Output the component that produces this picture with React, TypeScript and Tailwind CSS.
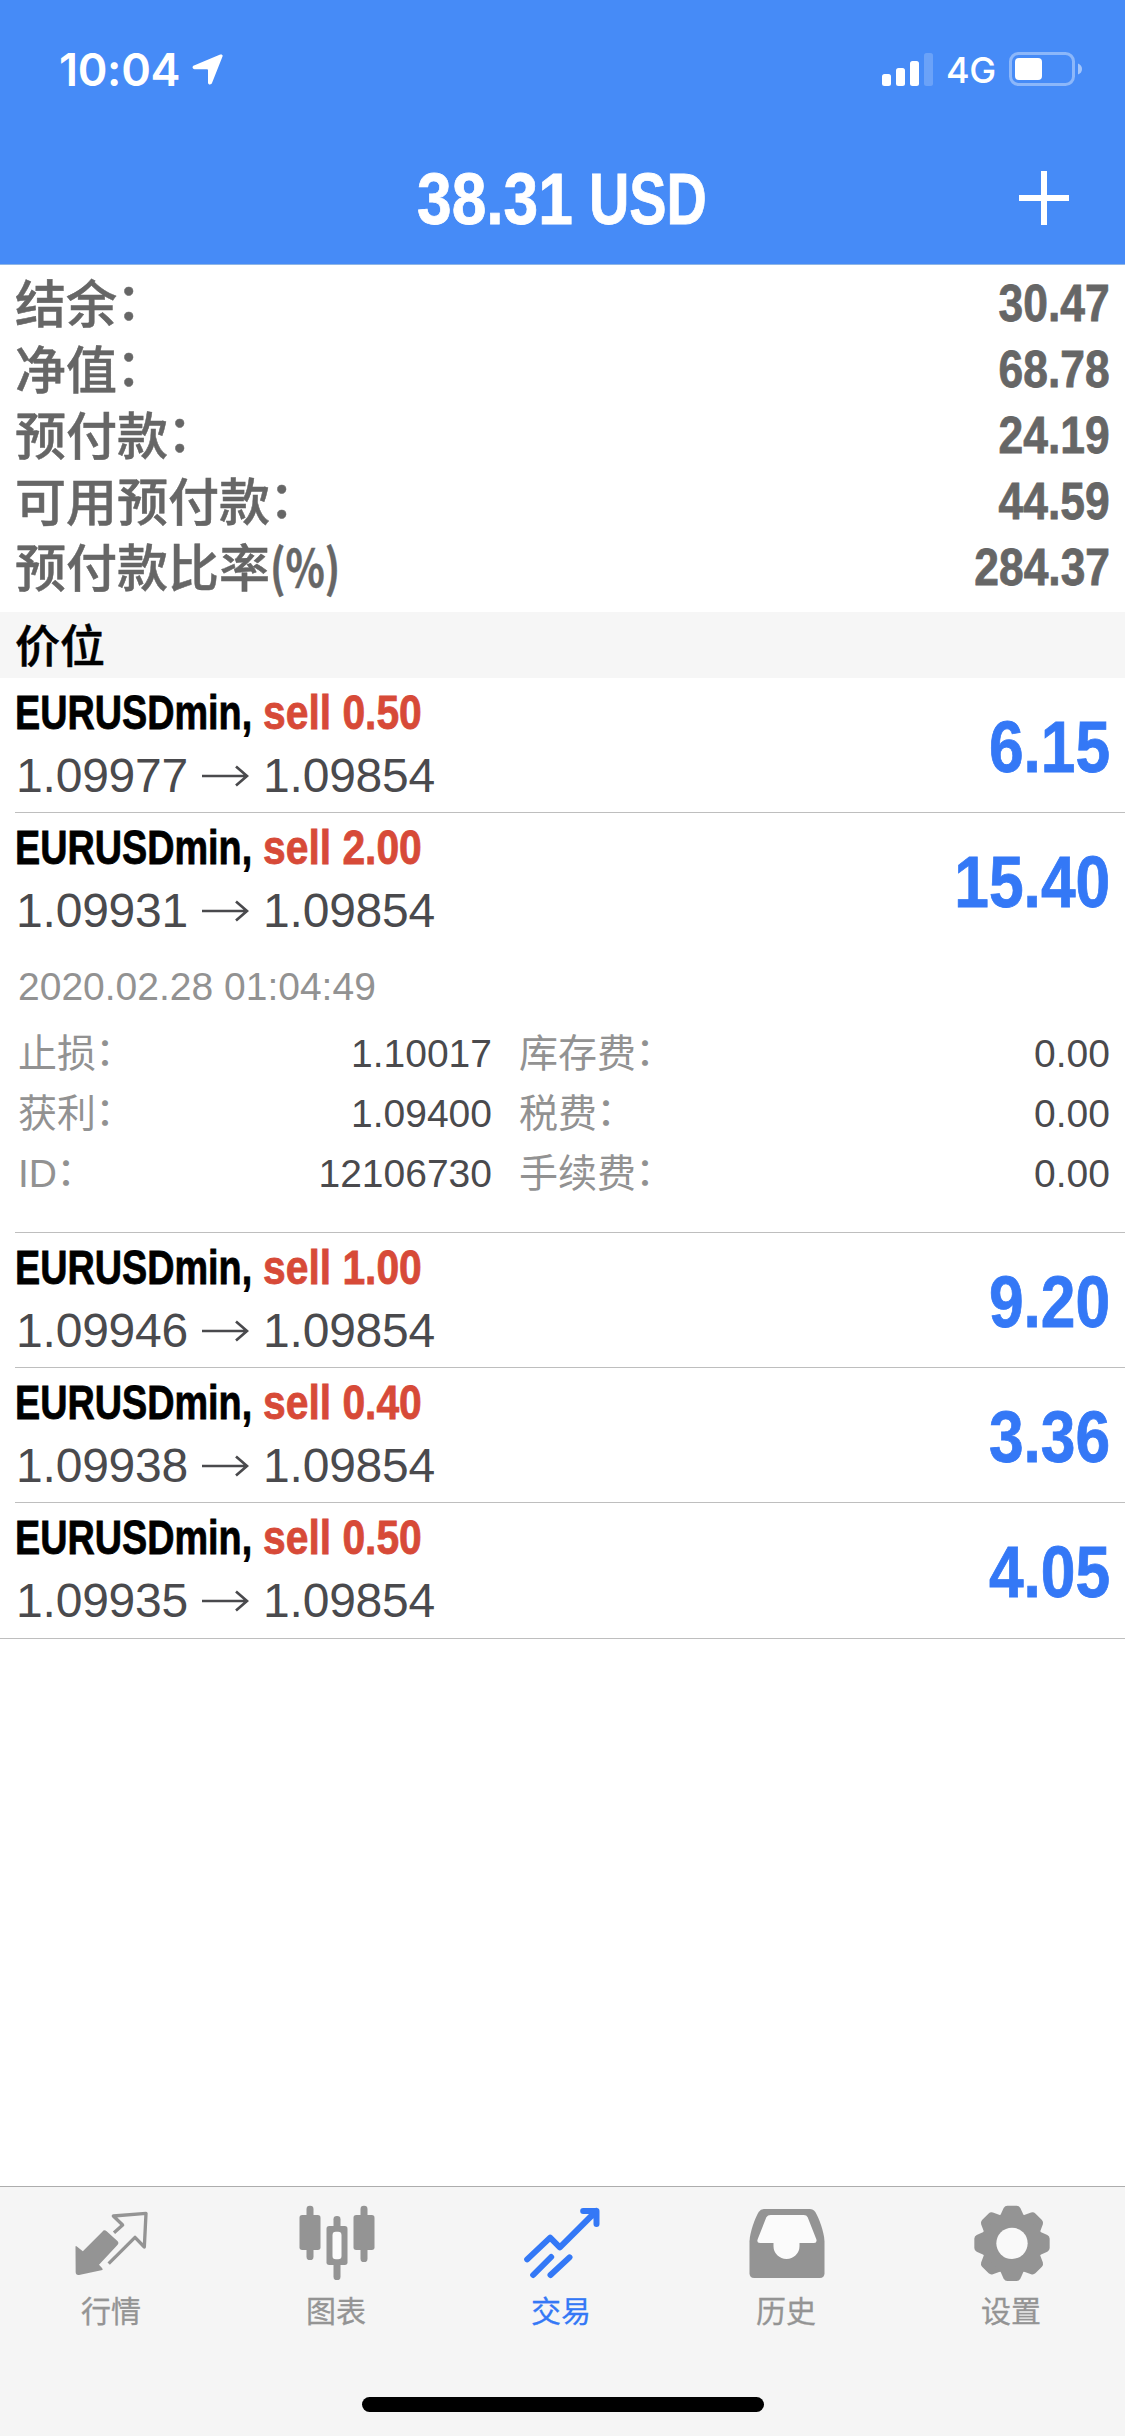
import type { ReactNode } from 'react';

const COND = "font-['Liberation_Sans',sans-serif] font-bold [-webkit-text-stroke:0.8px_currentColor]";
const HELV = "font-['Liberation_Sans','Noto_Sans_CJK_SC',sans-serif]";
const CJK = "font-['Noto_Sans_CJK_SC',sans-serif]";

interface Position {
  id: number;
  lots: string;
  open: string;
  profit: string;
  expanded?: boolean;
}

const SUMMARY = [
  ['结余：', '30.47'],
  ['净值：', '68.78'],
  ['预付款：', '24.19'],
  ['可用预付款：', '44.59'],
  ['预付款比率(%)', '284.37'],
];

const POSITIONS: Position[] = [
  { id: 1, lots: '0.50', open: '1.09977', profit: '6.15' },
  { id: 2, lots: '2.00', open: '1.09931', profit: '15.40', expanded: true },
  { id: 3, lots: '1.00', open: '1.09946', profit: '9.20' },
  { id: 4, lots: '0.40', open: '1.09938', profit: '3.36' },
  { id: 5, lots: '0.50', open: '1.09935', profit: '4.05' },
];

const DETAILS = [
  ['止损：', '1.10017', '库存费：', '0.00'],
  ['获利：', '1.09400', '税费：', '0.00'],
  ['ID：', '12106730', '手续费：', '0.00'],
];

// raises the full-width colon and squeezes the trailing "(%)"
function Label({ text }: { text: string }) {
  const m = text.match(/^(.*?)(：|\(%\))$/);
  if (!m) return <span>{text}</span>;
  return (
    <span className="whitespace-nowrap">
      {m[1]}
      {m[2] === '：' ? (
        <span className="inline-block -translate-x-[0.02em] -translate-y-[0.05em]">：</span>
      ) : (
        <span className="inline-block origin-left scale-x-[0.8] font-bold">(%)</span>
      )}
    </span>
  );
}

function StatusBar() {
  return (
    <div className="flex h-[132px] items-start justify-between pt-[42px] pr-[42px] pl-[59px] text-white">
      <div className="flex h-[54px] items-center">
        <span className="w-[133px] font-['Inter',sans-serif] text-[45px] leading-none font-semibold tracking-[-0.3px]">10:04</span>
        <svg className="h-[31px] w-[31px]" viewBox="0 0 31 31" fill="currentColor">
          <path d="M28.2 .6c1.6-.7 2.9.4 2.3 2L20 29c-.9 2.2-4 1.800-4-.6V16.400c0-.8-.4-1.200-1.200-1.200H2.600c-2.400 0-2.800-2.900-.6-3.800z" />
        </svg>
      </div>
      <div className="flex h-[54px] items-center">
        <svg className="h-[33px] w-[52px]" viewBox="0 0 52 33" fill="currentColor">
          <rect x="0" y="21" width="9" height="12" rx="2.500" />
          <rect x="14" y="15" width="9" height="18" rx="2.500" />
          <rect x="28" y="8" width="9" height="25" rx="2.500" />
          <rect x="42" y="0" width="9" height="33" rx="2.500" opacity=".2" />
        </svg>
        <span className="ml-[12px] w-[63px] pt-[2px] font-['Inter',sans-serif] text-[36px] leading-none font-medium tracking-[-0.5px]">4G</span>
        <svg className="h-[34px] w-[74px]" viewBox="0 0 74 34" fill="none">
          <rect x="1.500" y="1.500" width="63" height="31" rx="8" stroke="#fff" strokeOpacity=".38" strokeWidth="3" />
          <rect x="6" y="6" width="27" height="22" rx="4" fill="#fff" />
          <path d="M69 11.500q4 1.500 4 5.500t-4 5.500z" fill="#fff" fillOpacity=".5" />
        </svg>
      </div>
    </div>
  );
}

function Header() {
  return (
    <header className="h-[265px] border-b border-[#8fb6e6] bg-[#468bf7]">
      <StatusBar />
      <div className="grid h-[132px] grid-cols-[1fr_auto_1fr] items-center px-[54px] text-white">
        <span />
        <h1 className={`${COND} flex pt-px text-[72px] leading-none`}>
          <span className="w-[172px]">
            <span className="inline-block origin-left scale-x-[0.865]">38.31</span>
          </span>
          <span className="w-[120px]">
            <span className="inline-block origin-left scale-x-[0.775]">USD</span>
          </span>
        </h1>
        <svg className="h-[54px] w-[54px] justify-self-end" viewBox="0 0 54 54" stroke="currentColor" strokeWidth="6">
          <path d="M27 0v54M2 27h50" />
        </svg>
      </div>
    </header>
  );
}

function Summary() {
  return (
    <dl className="pt-[6px] pr-[15px] pb-[11px] pl-[15px] text-[51px] text-[#666]">
      {SUMMARY.map(([label, value]) => (
        <div key={label} className="flex h-[66px] items-center justify-between">
          <dt className={`${CJK} pb-[6px] leading-[60px] font-medium [-webkit-text-stroke:0.5px_currentColor]`}>
            <Label text={label} />
          </dt>
          <dd className={`${COND} origin-right scale-x-[0.87] leading-[66px]`}>{value}</dd>
        </div>
      ))}
    </dl>
  );
}

function PositionRow({ p, last }: { p: Position; last: boolean }) {
  return (
    <li className={last ? 'border-b border-[#bebebe]' : ''}>
      <div className={last ? 'h-[135px] pr-[15px] pl-[15px]' : 'ml-[15px] border-b border-[#bebebe] pr-[15px]'}>
        <div className="flex h-[134px] items-center justify-between">
          <div className="pb-[2px]">
            <p className={`${COND} flex h-[63px] text-[48px] leading-[63px] text-black`}>
              <span className="w-[248px]">
                <span className="inline-block origin-left scale-x-[0.787]">EURUSDmin,</span>
              </span>
              <span className="origin-left scale-x-[0.85] text-[#d74a38]">sell {p.lots}</span>
            </p>
            <p className={`${HELV} flex h-[63px] items-center pl-px text-[48px] leading-[63px] tracking-[-0.2px] text-[#4a4a4d]`}>
              <span className="w-[186px]">{p.open}</span>
              <svg className="h-[22px] w-[47px]" viewBox="0 0 47 22" fill="none" stroke="currentColor" strokeWidth="2.700">
                <path d="M0 11h45M34 1.500l11 9.500-11 9.500" />
              </svg>
              <span className="ml-[14px]">1.09854</span>
            </p>
          </div>
          <span className={`${COND} origin-right scale-x-[0.865] pt-[4px] text-[72px] leading-none text-[#3478f6]`}>{p.profit}</span>
        </div>

        {p.expanded && (
          <div className={`${HELV} h-[285px] pt-[10px] pl-[3px] text-[39px] text-[#929292]`}>
            <p className="h-[60px] leading-[60px]">2020.02.28 01:04:49</p>
            <div className="mt-[7px]">
              {DETAILS.map(([l1, v1, l2, v2]) => (
                <div key={l1} className="flex h-[60px] items-center leading-[60px]">
                  <span className="flex w-[474px] justify-between">
                    <Label text={l1} />
                    <span className="text-[#4a4a4d]">{v1}</span>
                  </span>
                  <span className="ml-[27px] flex flex-1 justify-between">
                    <Label text={l2} />
                    <span className="text-[#4a4a4d]">{v2}</span>
                  </span>
                </div>
              ))}
            </div>
          </div>
        )}
      </div>
    </li>
  );
}

function Icon({ children }: { children: ReactNode }) {
  return (
    <svg className="h-[80px] w-[80px]" viewBox="0 0 240 240" fill="currentColor">
      {children}
    </svg>
  );
}

const TOOTH = 'M-35 -84L-25 -106Q-21 -113 -14 -113H14Q21 -113 25 -106L35 -84Z';

const TABS = [
  {
    label: '行情',
    icon: (
      <Icon>
        <path d="M7.500 132q0-5 4-1.500L29.500 145 88 86q6-8 13-1l33 30q5 5 0 10L78 185l9 10q5 6-2 7L18 216q-10 1-10-9z" />
        <path d="M123 89l26-23-28-27 98-8-5 101-28-29-79 79" fill="none" stroke="currentColor" strokeWidth="10" strokeLinejoin="round" />
      </Icon>
    ),
  },
  {
    label: '图表',
    icon: (
      <Icon>
        <rect x="25.500" y="8" width="21" height="163" rx="10" />
        <rect x="4.500" y="36" width="63" height="105" rx="8" />
        <rect x="106.500" y="39" width="21" height="192" rx="10" />
        <rect x="85.500" y="69" width="63" height="117" rx="8" />
        <rect x="103.500" y="86" width="27" height="83" rx="10" fill="#fbfbfb" />
        <rect x="187.500" y="8" width="21" height="169" rx="10" />
        <rect x="166.500" y="36" width="63" height="105" rx="8" />
      </Icon>
    ),
  },
  {
    label: '交易',
    active: true,
    icon: (
      <Icon>
        <path
          d="M12.500 169l69-65 29 29L220 24M180.500 24h40v39M30.500 216l54-54M82.500 216l57-53"
          fill="none" stroke="currentColor" strokeWidth="18" strokeLinecap="round" strokeLinejoin="round"
        />
      </Icon>
    ),
  },
  {
    label: '历史',
    icon: (
      <Icon>
        <path d="M4.500 115C6 84 22 44 32 27q6-9 17-9h136q11 0 17 9c10 17 26 57 27.500 88v96q0 14-14 14h-197q-14 0-14-14z" />
        <path d="M68 36h99q9 0 12 7l26 66q3 11-7 11h-43.500v10a39 38 0 0 1-78 0v-10H36q-11 0-7-11l26-66q4-7 13-7z" fill="#fbfbfb" />
      </Icon>
    ),
  },
  {
    label: '设置',
    icon: (
      <Icon>
        <g transform="translate(117 121)">
          <circle r="92" />
          {[0, 45, 90, 135, 180, 225, 270, 315].map((a) => (
            <path key={a} d={TOOTH} transform={`rotate(${a})`} />
          ))}
          <circle r="47" fill="#f9f9f9" />
        </g>
      </Icon>
    ),
  },
];

function TabBar() {
  return (
    <nav className="flex h-[250px] flex-col items-center justify-between border-t border-[#adadad] bg-[#f5f5f5] pb-6">
      <div className="grid w-full grid-cols-5 pt-4">
        {TABS.map((t) => (
          <div key={t.label} className={`flex flex-col items-center ${t.active ? 'text-[#3478f6]' : 'text-[#949494]'}`}>
            {t.icon}
            <span className={`${CJK} mt-[6px] pr-[3px] text-[30px] leading-[40px] [-webkit-text-stroke:0.3px_currentColor]`}>{t.label}</span>
          </div>
        ))}
      </div>
      <div className="h-[15px] w-[402px] rounded-full bg-black" />
    </nav>
  );
}

export default function App() {
  return (
    <div className="flex h-[2436px] w-[1125px] flex-col overflow-hidden bg-white">
      <Header />
      <main className="flex-1">
        <Summary />
        <h2 className={`${CJK} h-[66px] bg-[#f6f6f6] pl-[15px] text-[45px] leading-[63px] font-medium text-black [-webkit-text-stroke:0.5px_currentColor]`}>价位</h2>
        <ul>
          {POSITIONS.map((p, i) => (
            <PositionRow key={p.id} p={p} last={i === POSITIONS.length - 1} />
          ))}
        </ul>
      </main>
      <TabBar />
    </div>
  );
}
